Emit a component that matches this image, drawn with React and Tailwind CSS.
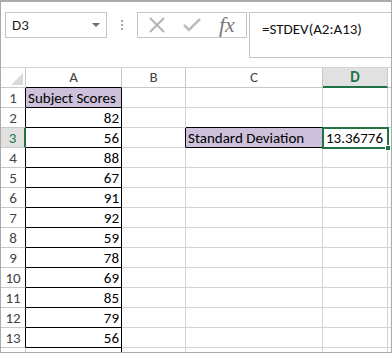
import React from "react";

const rows = [
  { n: 1, a: "Subject Scores" },
  { n: 2, a: "82" },
  { n: 3, a: "56" },
  { n: 4, a: "88" },
  { n: 5, a: "67" },
  { n: 6, a: "91" },
  { n: 7, a: "92" },
  { n: 8, a: "59" },
  { n: 9, a: "78" },
  { n: 10, a: "69" },
  { n: 11, a: "85" },
  { n: 12, a: "79" },
  { n: 13, a: "56" },
];

const cellFont = { fontFamily: "Carlito, 'Liberation Sans', Arial, sans-serif" };

function Row({ r }) {
  const sel = r.n === 3;
  return (
    <div className="flex h-[20px]">
      <div
        className={
          sel
            ? "w-[25px] shrink-0 border-b border-b-[#c8c8c8] border-r-2 border-r-[#217346] bg-[#e1e1e1] text-[#217346] flex items-center justify-center pt-[1px] text-[15px]"
            : "w-[25px] shrink-0 border-b border-b-[#c8c8c8] border-r border-r-[#000] text-[#444] flex items-center justify-center pt-[1px] text-[15px]"
        }
      >
        {r.n}
      </div>
      <div
        className={
          r.n === 1
            ? "w-[96px] shrink-0 border-r border-b border-black bg-[#ccc0da] text-black flex items-center pl-[2px] pt-[1px] text-[15px]"
            : "w-[96px] shrink-0 border-r border-b border-black text-black flex items-center justify-end pr-[2px] pt-[1px] text-[15px]"
        }
      >
        {r.a}
      </div>
      <div
        className={
          sel
            ? "w-[64px] shrink-0 border-r border-r-black border-b border-b-[#d4d4d4]"
            : "w-[64px] shrink-0 border-r border-b border-[#d4d4d4]"
        }
      />
      <div
        className={
          sel
            ? "w-[137px] shrink-0 border-r border-b border-black bg-[#ccc0da] text-black flex items-center pl-[2px] pt-[1px] text-[15px]"
            : r.n === 2
            ? "w-[137px] shrink-0 border-r border-r-[#d4d4d4] border-b border-b-black"
            : "w-[137px] shrink-0 border-r border-b border-[#d4d4d4]"
        }
      >
        {sel ? "Standard Deviation" : null}
      </div>
      <div className="w-[65px] shrink-0 border-r border-b border-[#d4d4d4] text-black flex items-center justify-end pr-[4px] pt-[1px] text-[15px]">
        {sel ? "13.36776" : null}
      </div>
      <div className="flex-1 border-b border-[#d4d4d4]" />
    </div>
  );
}

export default function App() {
  return (
    <div
      className="relative w-[392px] h-[353px] bg-white border border-t-2 border-[#ababab] overflow-hidden flex flex-col"
      style={cellFont}
    >
      {/* Formula bar */}
      <div className="h-[65px] shrink-0 flex items-start pt-[10px]">
        <div className="ml-[4px] w-[102px] h-[26px] border border-[#c6c6c6] flex items-center justify-between pl-[6px] pr-[6px] text-[15px] text-[#222]">
          <span>D3</span>
          <svg width="8" height="4" viewBox="0 0 8 4">
            <polygon points="0,0 8,0 4,4" fill="#6d6d6d" />
          </svg>
        </div>
        <div className="w-[30px] h-[26px] flex flex-col items-center justify-center gap-[2px]">
          <div className="w-[2px] h-[2px] bg-[#a3a3a3]" />
          <div className="w-[2px] h-[2px] bg-[#a3a3a3]" />
          <div className="w-[2px] h-[2px] bg-[#a3a3a3]" />
        </div>
        <div className="w-[110px] h-[26px] border border-[#c6c6c6] flex items-center">
          <svg className="ml-[11px]" width="16" height="16" viewBox="0 0 16 16">
            <path d="M1 1 L15 15 M15 1 L1 15" stroke="#b5b5b5" strokeWidth="2" fill="none" />
          </svg>
          <svg className="ml-[18px]" width="18" height="16" viewBox="0 0 18 16">
            <path d="M1 8 L6 13 L17 2" stroke="#bdbdbd" strokeWidth="2.6" fill="none" />
          </svg>
          <span
            className="ml-[18px] text-[22px] italic text-[#7a7a7a] leading-none"
            style={{ fontFamily: "'Liberation Serif', 'Times New Roman', serif" }}
          >
            fx
          </span>
        </div>
        <div className="ml-[2px] flex-1 h-[46px] border-l border-t border-b border-[#c6c6c6] pl-[12px] pt-[5px] text-[15px] text-[#111]">
          =STDEV(A2:A13)
        </div>
      </div>

      {/* Column headers */}
      <div className="flex h-[21px] shrink-0 border-t border-[#d4d4d4] text-[15px] text-[#444]">
        <div className="w-[25px] shrink-0 border-r border-b border-[#c8c8c8] flex items-end justify-end pr-[2px] pb-[2px]">
          <svg width="12" height="12" viewBox="0 0 12 12">
            <polygon points="12,0 12,12 0,12" fill="#dadada" />
          </svg>
        </div>
        <div className="w-[96px] shrink-0 border-r border-r-[#c8c8c8] border-b border-b-black flex items-center justify-center">A</div>
        <div className="w-[64px] shrink-0 border-r border-b border-[#c8c8c8] flex items-center justify-center">B</div>
        <div className="w-[137px] shrink-0 border-r border-b border-[#c8c8c8] flex items-center justify-center">C</div>
        <div className="w-[65px] shrink-0 border-r border-r-[#c8c8c8] border-b-2 border-b-[#217346] bg-[#e1e1e1] text-[#217346] font-bold flex items-center justify-center">D</div>
        <div className="flex-1 border-b border-[#c8c8c8]" />
      </div>

      {/* Rows */}
      {rows.map((r) => (
        <Row key={r.n} r={r} />
      ))}
      <div className="flex flex-1">
        <div className="w-[25px] shrink-0 border-r border-[#c8c8c8]" />
        <div className="w-[96px] shrink-0 border-r border-black" />
        <div className="w-[64px] shrink-0 border-r border-[#d4d4d4]" />
        <div className="w-[137px] shrink-0 border-r border-[#d4d4d4]" />
        <div className="w-[65px] shrink-0 border-r border-[#d4d4d4]" />
        <div className="flex-1" />
      </div>

      {/* Active cell selection */}
      <div className="absolute left-[321px] top-[125px] w-[67px] h-[22px] border-2 border-[#217346] pointer-events-none" />
      <div className="absolute left-[384px] top-[143px] w-[6px] h-[6px] bg-[#217346] border border-white pointer-events-none" />
    </div>
  );
}
